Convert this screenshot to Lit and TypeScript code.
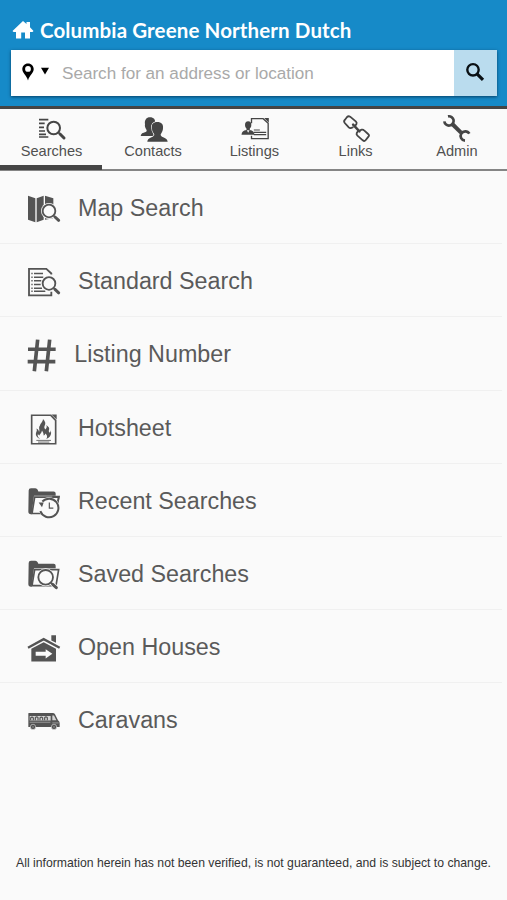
import { LitElement, html, css, svg } from "lit";
import { customElement, property, state } from "lit/decorators.js";

type Tab = { label: string; box: string; art: unknown };
type Entry = { label: string; box: string; art: unknown; tight?: boolean };

const TABS: Tab[] = [
  {
    label: "Searches",
    box: "104 42 96 90",
    art: svg`
      <path d="M116 59h28M116 70h17M116 82h15M116 93h18M116 103h21M116 111h28" fill="none" stroke="currentColor" stroke-width="5"/>
      <circle cx="160" cy="84" r="19" fill="#fafafa" stroke="currentColor" stroke-width="6"/>
      <path d="M175 98l6 6" stroke="currentColor" stroke-width="5"/>
      <path d="M179 102l12 12" stroke="currentColor" stroke-width="9" stroke-linecap="round"/>`,
  },
  {
    label: "Contacts",
    box: "408 42 96 90",
    art: svg`
      <path d="M419 108c1-8 6-9 15-12 4-2 4-5 1-9-3-5-4-9-3-14-2-13 4-21 15-21s17 7 15 18l-6 28 4 10z" fill="currentColor"/>
      <path d="M439 125c1-9 6-11 16-15 6-3 6-6 3-10-4-5-5-10-5-15-3-12 4-19 16-19s19 7 17 19c0 5-2 10-5 15-3 4-3 7 2 10 10 4 16 6 17 15z" fill="currentColor" stroke="#fafafa" stroke-width="4" paint-order="stroke"/>`,
  },
  {
    label: "Listings",
    box: "112.5 42 96 90",
    art: svg`
      <path d="M153 70V56h35L203 70v46h-50v-9" fill="none" stroke="currentColor" stroke-width="4"/>
      <path d="M191 54h14v14z" fill="currentColor"/>
      <path d="M160 90h18M160 97h37M160 104h37" fill="none" stroke="currentColor" stroke-width="3.500"/>
      <ellipse cx="143" cy="75" rx="9.500" ry="11" fill="currentColor"/>
      <path d="M138 83h10v7c9 2 13 5 14 14h-39c1-9 5-12 15-14z" fill="currentColor"/>
      <path d="M139 91l4 7 4-7z" fill="#fafafa"/>`,
  },
  {
    label: "Links",
    box: "416.7 42 96 90",
    art: svg`
      <g fill="none" stroke="currentColor" stroke-width="5.500" stroke-linejoin="round" stroke-linecap="round">
        <path d="M458 82l-5 2q-4 1-7-2l-12-13q-4-5 0-9l7-9q4-4 9-1l17 14q4 4 2 8l-4 6"/>
        <path d="M480 91l5-2q4-1 7 2l12 11q5 4 1 8l-8 10q-4 5-9 1l-16-14q-4-4-2-8l4-6"/>
        <path d="M459 74l19 20" stroke-width="7.500"/>
      </g>`,
  },
  {
    label: "Admin",
    box: "721 42 96 90",
    art: svg`
      <path d="M758 72L784 98" stroke="currentColor" stroke-width="12"/>
      <path d="M745 49a14 14 0 1 1-11 15" fill="none" stroke="currentColor" stroke-width="8"/>
      <path d="M809 101a14 14 0 1 0-13 21" fill="none" stroke="currentColor" stroke-width="8"/>`,
  },
];

const lens = (cx: number, cy: number, r: number) => svg`
  <circle cx=${cx} cy=${cy} r=${r + 5} fill="#fafafa"/>
  <path d="M${cx + r * 0.75} ${cy + r * 0.75}L${cx + r + 12} ${cy + r + 11}" stroke="#fafafa" stroke-width="14"/>
  <circle cx=${cx} cy=${cy} r=${r} fill="#fafafa" stroke="currentColor" stroke-width="5.500"/>
  <path d="M${cx + r * 0.75} ${cy + r * 0.75}l5 5" stroke="currentColor" stroke-width="5"/>
  <path d="M${cx + r - 1} ${cy + r - 1}l11 10" stroke="currentColor" stroke-width="9" stroke-linecap="round"/>`;

const ENTRIES: Entry[] = [
  {
    label: "Map Search",
    box: "48 -27 108 216.6",
    art: svg`
      <path d="M54 47l22 8v72l-22-8zM80 55l21-8v72l-21 8zM105 47l25 8v60l-25 4z" fill="currentColor"/>
      ${lens(117, 93, 19)}`,
  },
  {
    label: "Standard Search",
    box: "48 192.6 108 216.6",
    art: svg`
      <path d="M124 284v-3l-15-14H57v80h67v-11" fill="none" stroke="currentColor" stroke-width="5.500"/>
      <path d="M64 281h4M64 292h4M64 303h4M64 314h4M64 325h4M64 334h4M72 281h27M72 292h28M72 303h22M72 314h20M72 325h24M72 334h34" fill="none" stroke="currentColor" stroke-width="4.500"/>
      ${lens(117, 311, 19)}`,
  },
  {
    label: "Listing Number",
    box: "48 -22.8 108 216.6",
    tight: true,
    art: svg`<path d="M83 45L73 140M119 45l-10 95M54 74h83M53 111h83" fill="none" stroke="currentColor" stroke-width="11"/>`,
  },
  {
    label: "Hotsheet",
    box: "48 196.8 108 216.6",
    art: svg`
      <path d="M122 269.500H65V355h72v-70z" fill="none" stroke="currentColor" stroke-width="5"/>
      <path d="M124 267h16v15z" fill="currentColor"/>
      <path d="M79 345h44M84 350h34" stroke="currentColor" stroke-width="2.500"/>
      <path d="M91 341c-11-4-16-12-12-21 2-5 2-7 0-11 7 3 8 7 8 11 4-8-3-13 3-20 2-7 8-9 9-19 7 8 9 13 5 20-2 5-1 7 2 11 5-4 5-8 3-13 8 6 10 10 8 15-2 4 0 6 3 8 2-3 2-5 1-8 6 10 0 23-12 27 4-6 3-13-3-17-1 4-3 5-5 6 0-8-3-11-5-15-1 8-7 10-8 15-3-2-4-3-4-6-3 7 1 13 7 17z" fill="currentColor"/>`,
  },
  {
    label: "Recent Searches",
    box: "48 -33.6 108 216.6",
    art: svg`
      <path d="M56 46q0-7 7-7h13q5 0 7 5l2 5h46q6 0 6 6v7H72l-7 55h-2q-8 0-8-8z" fill="currentColor"/>
      <path d="M74 66h72l-7 49H66z" fill="#fafafa" stroke="currentColor" stroke-width="5"/>
      <circle cx="117" cy="98" r="32" fill="#fafafa"/>
      <path d="M127 64h20l-3 14" fill="none" stroke="currentColor" stroke-width="5"/>
      <path d="M97 79a28 28 0 1 1-6 29" fill="none" stroke="currentColor" stroke-width="6"/>
      <path d="M86 82h15l-5 14z" fill="currentColor"/>
      <path d="M118 82v17h12" fill="none" stroke="currentColor" stroke-width="3.500"/>`,
  },
  {
    label: "Saved Searches",
    box: "48 186 108 216.6",
    art: svg`
      <path d="M56 264q0-7 7-7h13q5 0 7 5l2 4h46q6 0 6 6v8H72l-7 55h-2q-8 0-8-8z" fill="currentColor"/>
      <path d="M74 284h72l-8 48H66z" fill="#fafafa" stroke="currentColor" stroke-width="5"/>
      ${lens(107, 307, 22)}`,
  },
  {
    label: "Open Houses",
    box: "48 -44.4 108 216.6",
    art: svg`
      <path d="M124 31h14v23l-14-7z" fill="currentColor"/>
      <path d="M54 69l47-26 48 26" fill="none" stroke="currentColor" stroke-width="7"/>
      <path d="M64 72l37-20 37 20v38H64z" fill="currentColor"/>
      <path d="M77 81h30v-8l20 14-20 14v-8H77z" fill="#fafafa"/>`,
  },
  {
    label: "Caravans",
    box: "48 175.2 108 216.6",
    art: svg`
      <path d="M56 265h72q5 0 7 4l9 18q5 3 5 8v12H55v-40z" fill="currentColor"/>
      <path d="M59 274h63v14H59zM127 273h5l7 14h-12z" fill="#d4d4d4"/>
      <path d="M62 287v-7q4-5 8 0v7M76 287v-8q4-4 8 0v8M90 287v-7q4-5 8 0v7M104 287v-8q4-4 8 0v8" fill="none" stroke="currentColor" stroke-width="3.500"/>
      <path d="M59 293h62M127 295h19" stroke="#b8b8b8" stroke-width="2"/>
      <g fill="currentColor" stroke="#fafafa" stroke-width="1.500">
        <circle cx="69" cy="307" r="8"/><circle cx="132" cy="307" r="8"/>
      </g>
      <g fill="#aaa"><circle cx="69" cy="307" r="2"/><circle cx="132" cy="307" r="2"/></g>`,
  },
];

@customElement("search-header")
class SearchHeader extends LitElement {
  static styles = css`
    :host { display: block; height: 106px; background: #168ac8; box-sizing: border-box; padding: 17px 10px 0 11px; }
    .brand { display: flex; align-items: center; height: 27px; color: #fff; white-space: nowrap; }
    .home { width: 22px; height: 20px; margin: -1px 6px 0 1px; }
    .name { font: 700 20.5px/27px Lato, sans-serif; letter-spacing: 0.12px; }
    .search { display: flex; height: 46px; margin-top: 6px; background: #fff; box-shadow: 0 1px 3px rgba(0, 40, 70, 0.75); }
    .place { display: flex; align-items: center; padding-left: 10px; gap: 5px; }
    .pin { width: 14px; height: 20px; margin-top: -3px; }
    .caret { width: 10px; height: 8px; margin-top: -4px; }
    .hint { flex: 1; margin-left: 12px; color: #a9a9a9; font: 17.1px/47px "Liberation Sans", Arial, sans-serif; white-space: nowrap; }
    .go { display: flex; width: 43.500px; align-items: center; justify-content: center; background: #badcee; }
    .glass { width: 20px; height: 20px; margin-top: -3px; }
  `;

  render() {
    return html`
      <div class="brand">
        <svg class="home" viewBox="0 0 22 20" fill="currentColor">
          <path d="M11 1l3.500 3V2H18v5.300L21.500 11l-1 1H18v6.500h-5v-6H9.200v6H4V12H1.500l-1-1z" />
        </svg>
        <span class="name">Columbia Greene Northern Dutch</span>
      </div>
      <div class="search">
        <div class="place">
          <svg class="pin" viewBox="0 0 14 20">
            <path fill-rule="evenodd" d="M7 1.500c3.400 0 5.700 2.500 5.700 5.500 0 4-4.200 6-5.700 11.500C5.500 13 1.300 11 1.300 7 1.300 4 3.600 1.500 7 1.500zM7 4a2.900 2.900 0 1 0 0 5.800A2.900 2.900 0 1 0 7 4z" />
          </svg>
          <svg class="caret" viewBox="0 0 10 8"><path d="M1 .7h8L5 7.500z" /></svg>
        </div>
        <span class="hint">Search for an address or location</span>
        <div class="go">
          <svg class="glass" viewBox="0 0 20 20" fill="none" stroke="#0a1014">
            <circle cx="8" cy="7.800" r="5.700" stroke-width="2.400" />
            <path d="M12 11.800l6 6" stroke-width="3.200" />
          </svg>
        </div>
      </div>
    `;
  }
}

@customElement("tab-strip")
class TabStrip extends LitElement {
  @property({ type: Number }) active = 0;

  static styles = css`
    :host { display: grid; grid-template-columns: 102px repeat(4, 1fr); height: 65px; box-sizing: border-box; border-top: 3px solid #454545; border-bottom: 2px solid #858585; color: #454545; }
    .tab { display: flex; flex-direction: column; align-items: center; padding-top: 5px; height: 60px; box-sizing: border-box; }
    .on { box-shadow: 0 1px 0 #454545, inset 0 -4px 0 #454545; }
    .art { width: 32px; height: 30px; flex: none; }
    .label { margin: -1px 0 0 1px; font: 14.6px/17px "Liberation Sans", Arial, sans-serif; color: #505050; }
  `;

  render() {
    return TABS.map(
      (t, i) => html`<div class="tab ${i === this.active ? "on" : ""}">
        <svg class="art" viewBox=${t.box}>${t.art}</svg>
        <span class="label">${t.label}</span>
      </div>`
    );
  }
}

@customElement("app-root")
class AppRoot extends LitElement {
  @state() private tab = 0;

  static styles = css`
    :host { display: flex; flex-direction: column; height: 900px; background: #fafafa; color: #545454; font-family: "Liberation Sans", Arial, sans-serif; }
    .row { display: flex; height: 73.2px; box-sizing: border-box; margin-right: 5px; padding-left: 26px; border-bottom: 1px solid #f0f0f0; }
    .row:last-child { border-bottom-color: transparent; }
    .art { width: 36px; height: 72.2px; flex: none; }
    .label { margin-left: 16px; font-size: 23.3px; line-height: 75px; white-space: nowrap; color: #5a5a5a; }
    .tight { margin-left: 12.300px; }
    .row:last-child .label { line-height: 74px; }
    .note { margin: auto 0 28px; text-align: center; font-size: 12.23px; line-height: 18px; color: #333; white-space: nowrap; }
  `;

  render() {
    return html`
      <search-header></search-header>
      <tab-strip .active=${this.tab}></tab-strip>
      <div>
        ${ENTRIES.map(
          (e) => html`<div class="row">
            <svg class="art" viewBox=${e.box}>${e.art}</svg>
            <span class="label ${e.tight ? "tight" : ""}">${e.label}</span>
          </div>`
        )}
      </div>
      <div class="note">All information herein has not been verified, is not guaranteed, and is subject to change.</div>
    `;
  }
}
